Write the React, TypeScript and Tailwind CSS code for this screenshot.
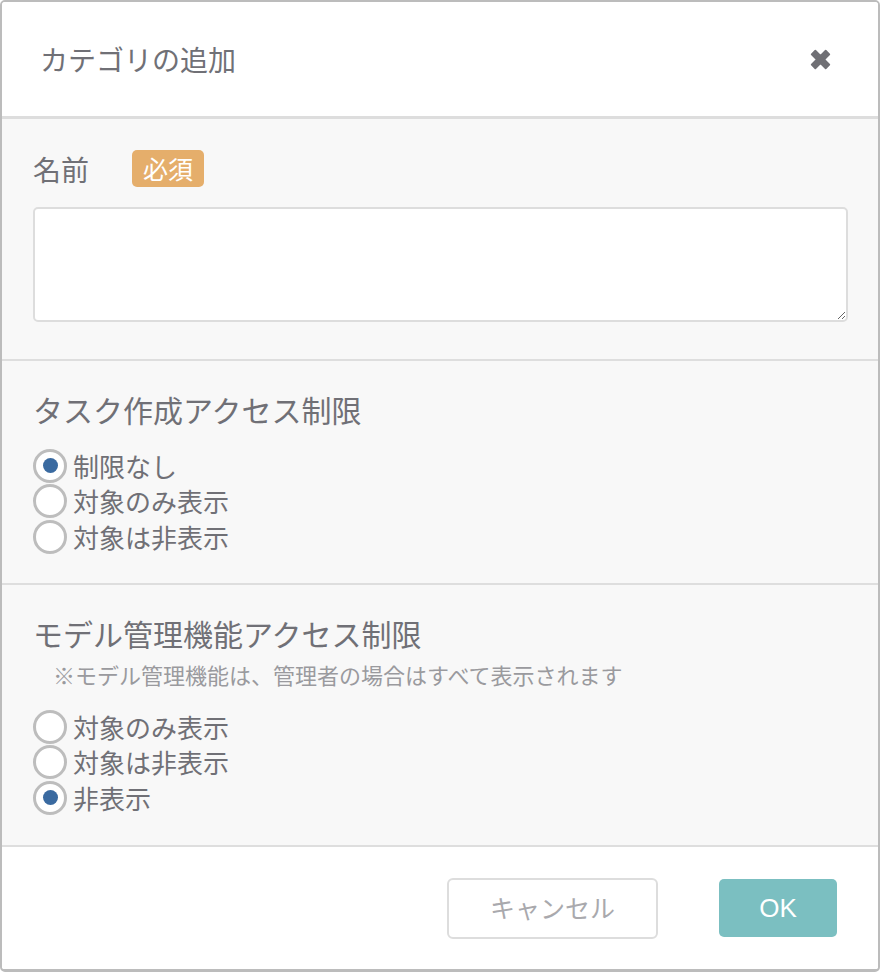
const font = { fontFamily: '"Noto Sans CJK JP", "Noto Sans", sans-serif' };

function Radio({ label, checked }: { label: string; checked?: boolean }) {
  return (
    <label className="flex h-[35.5px] items-center">
      <span className="flex h-[34px] w-[34px] shrink-0 items-center justify-center rounded-full border-[3px] border-[#bdbdbd] bg-white">
        {checked && <span className="h-[15px] w-[15px] rounded-full bg-[#3a6aa0]" />}
      </span>
      <span className="ml-[6px] text-[26px] leading-none text-[#707076]">{label}</span>
    </label>
  );
}

export default function App() {
  return (
    <div className="h-[972px] w-[880px] bg-white" style={font}>
      <div className="flex h-full flex-col overflow-hidden rounded-[5px] border-x-2 border-t-2 border-b-[3px] border-[#bcbcbc]">
        <header className="flex h-[117px] shrink-0 items-center justify-between border-b-[3px] border-[#dddddd] bg-white pl-[38px] pr-[44px]">
          <h1 className="text-[28px] font-normal leading-none text-[#707076]">カテゴリの追加</h1>
          <button className="text-[#707075]" aria-label="close">
            <svg width="27" height="27" viewBox="0 0 24 24">
              <path
                d="M4.2 7.4 L7.4 4.2 L12 8.8 L16.6 4.2 L19.8 7.4 L15.2 12 L19.8 16.6 L16.6 19.8 L12 15.2 L7.4 19.8 L4.2 16.6 L8.8 12 Z"
                fill="currentColor"
                stroke="currentColor"
                strokeWidth="1.6"
                strokeLinejoin="round"
              />
            </svg>
          </button>
        </header>

        <div className="flex-1 bg-[#f8f8f8]">
          <section className="h-[242px] border-b-2 border-[#dedede] px-[31px] pt-[31px]">
            <div className="flex h-[37px] items-center">
              <span className="text-[28px] leading-none text-[#707076]">名前</span>
              <span className="ml-[43px] flex h-[37px] items-center rounded-[5px] bg-[#e5ae6b] px-[11px] text-[25px] leading-none text-white">
                必須
              </span>
            </div>
            <textarea className="mt-[20px] block h-[115px] w-[815px] rounded-[5px] border-2 border-[#dddddd] bg-white p-2 outline-none" />
          </section>

          <section className="h-[224px] border-b-2 border-[#dedede] px-[31px] pt-[28px]">
            <h2 className="text-[30px] font-normal leading-[40px] text-[#707076]">タスク作成アクセス制限</h2>
            <div className="mt-[19px] flex flex-col">
              <Radio label="制限なし" checked />
              <Radio label="対象のみ表示" />
              <Radio label="対象は非表示" />
            </div>
          </section>

          <section className="h-[262px] border-b-2 border-[#dedede] px-[31px] pt-[28px]">
            <h2 className="text-[30px] font-normal leading-[40px] text-[#707076]">モデル管理機能アクセス制限</h2>
            <p className="mt-[7px] pl-[20px] text-[22px] leading-[28px] text-[#9a9a9e]">
              ※モデル管理機能は、管理者の場合はすべて表示されます
            </p>
            <div className="mt-[21px] flex flex-col">
              <Radio label="対象のみ表示" />
              <Radio label="対象は非表示" />
              <Radio label="非表示" checked />
            </div>
          </section>
        </div>

        <footer className="flex h-[122px] shrink-0 items-center justify-end gap-[61px] bg-white pr-[41px]">
          <button className="h-[61px] w-[211px] rounded-[6px] border-2 border-[#dddddd] bg-white text-[25px] text-[#a9a9ad]">
            キャンセル
          </button>
          <button
            className="h-[58px] w-[118px] rounded-[5px] bg-[#7bbfc1] text-[26px] text-white"
            style={{ fontFamily: '"Liberation Sans", Arial, sans-serif' }}
          >
            OK
          </button>
        </footer>
      </div>
    </div>
  );
}
